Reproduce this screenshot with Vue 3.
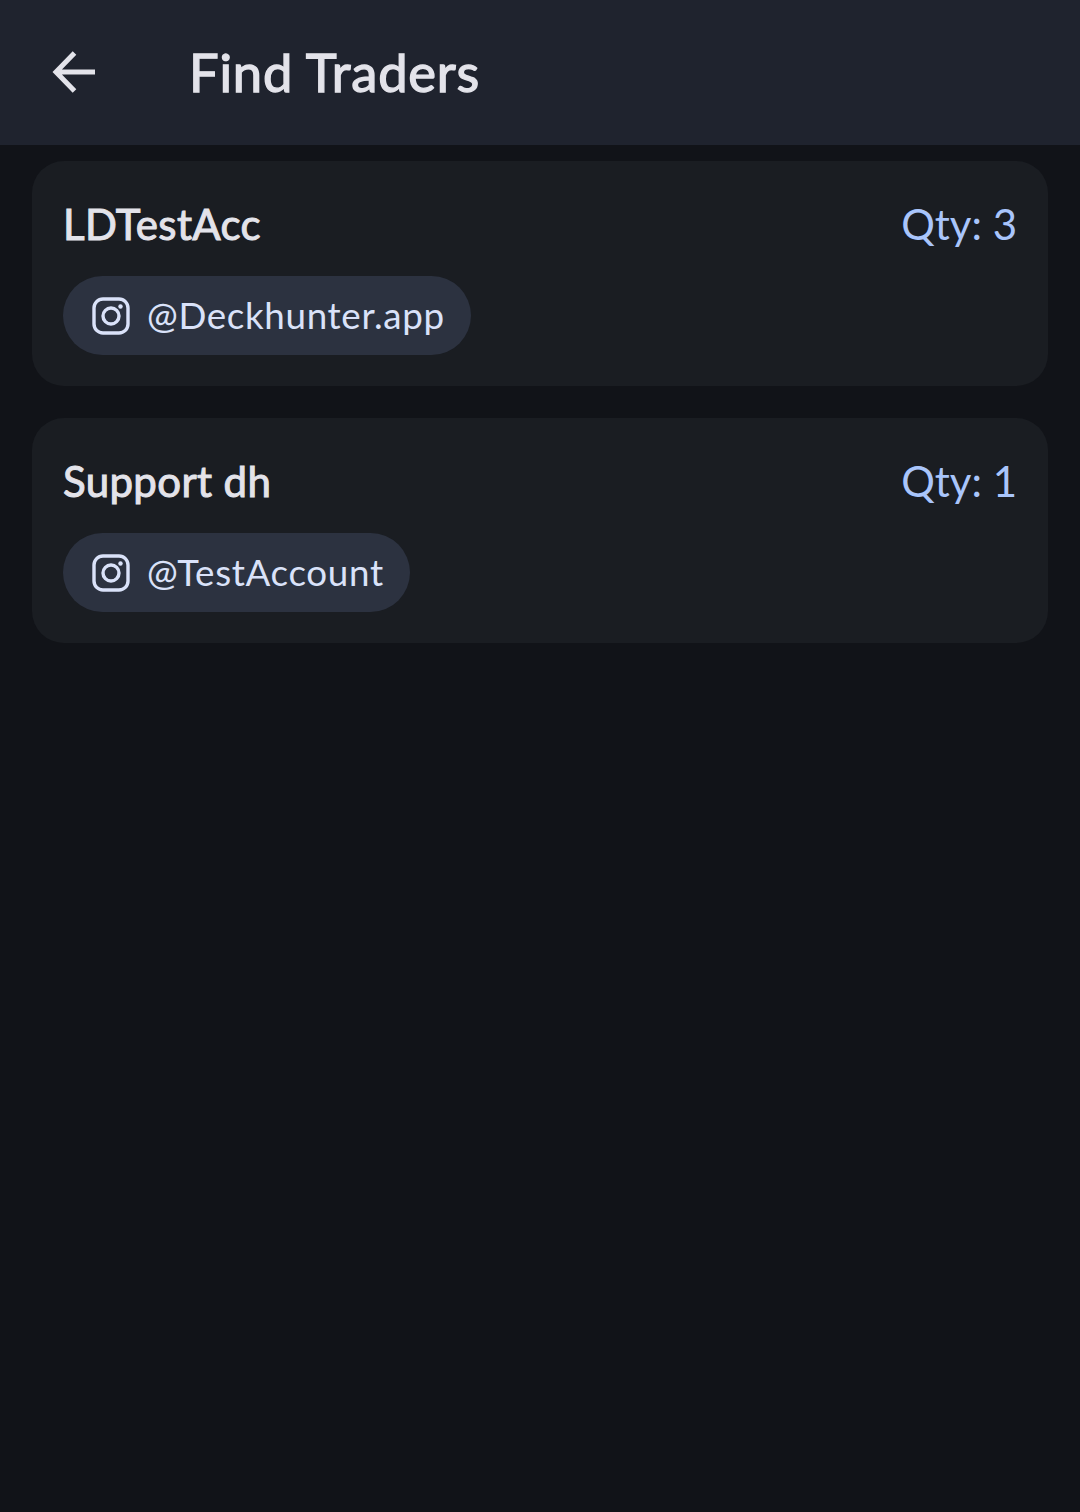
<script setup>
const traders = [
  { name: 'LDTestAcc', qty: 3, handle: '@Deckhunter.app' },
  { name: 'Support dh', qty: 1, handle: '@TestAccount' },
]
</script>

<template>
  <div class="page">
    <header class="bar">
      <svg class="back" width="44" height="44" viewBox="0 0 44 44" fill="none" stroke="#e3e3ea" stroke-width="5">
        <path d="M43 22H4M22.500 3 4 22l18.500 19" />
      </svg>
      <h1 class="title">Find Traders</h1>
    </header>
    <main class="list">
      <section v-for="t in traders" :key="t.name" class="card">
        <div class="row">
          <span class="name">{{ t.name }}</span>
          <span class="qty">Qty: {{ t.qty }}</span>
        </div>
        <div class="chip">
          <svg class="ig" width="38" height="38" viewBox="0 0 38 38" fill="none" stroke="#dae2f9" stroke-width="3.400">
            <rect x="2" y="2" width="34" height="34" rx="9" />
            <circle cx="19" cy="19" r="8" />
            <circle cx="28.500" cy="9.500" r="2.200" fill="#dae2f9" stroke="none" />
          </svg>
          <span class="handle">{{ t.handle }}</span>
        </div>
      </section>
    </main>
  </div>
</template>

<style>
html, body { margin: 0; background: #111318; }
</style>

<style scoped>
.page {
  width: 1080px;
  height: 1512px;
  background: #111318;
  font-family: Lato, sans-serif;
  overflow: hidden;
}
.bar {
  height: 145px;
  box-sizing: border-box;
  background: #1f232e;
  display: flex;
  align-items: center;
  padding: 0 0 0 52px;
}
.back { flex: none; margin-bottom: 2px; }
.title {
  margin: 0 0 2px 93px;
  font-size: 52.5px;
  font-weight: 400;
  line-height: 70px;
  letter-spacing: 0.8px;
  -webkit-text-stroke: 1.3px #e3e3ea;
  color: #e3e3ea;
}
.list {
  padding: 16px 32px;
  display: flex;
  flex-direction: column;
  gap: 32px;
}
.card {
  box-sizing: border-box;
  background: #1a1d22;
  border-radius: 32px;
  padding: 32px 31px 31px;
  display: flex;
  flex-direction: column;
  gap: 20px;
}
.row {
  display: flex;
  justify-content: space-between;
  align-items: center;
  height: 63px;
}
.name {
  font-size: 42px;
  font-weight: 400;
  line-height: 63px;
  color: #e3e3ea;
  letter-spacing: 0.35px;
  -webkit-text-stroke: 1px #e3e3ea;
}
.qty {
  font-size: 42px;
  font-weight: 400;
  line-height: 60px;
  letter-spacing: 0;
  margin-bottom: 2px;
  color: #a9c5fb;
}
.chip {
  align-self: flex-start;
  height: 79px;
  box-sizing: border-box;
  background: #2c3240;
  border-radius: 40px;
  display: flex;
  align-items: center;
  gap: 17px;
  padding: 0 26px 0 29px;
}
.handle {
  font-size: 36.75px;
  font-weight: 400;
  line-height: 50px;
  margin-bottom: 2px;
  color: #dae2f9;
  letter-spacing: 0.66px;
}
</style>
